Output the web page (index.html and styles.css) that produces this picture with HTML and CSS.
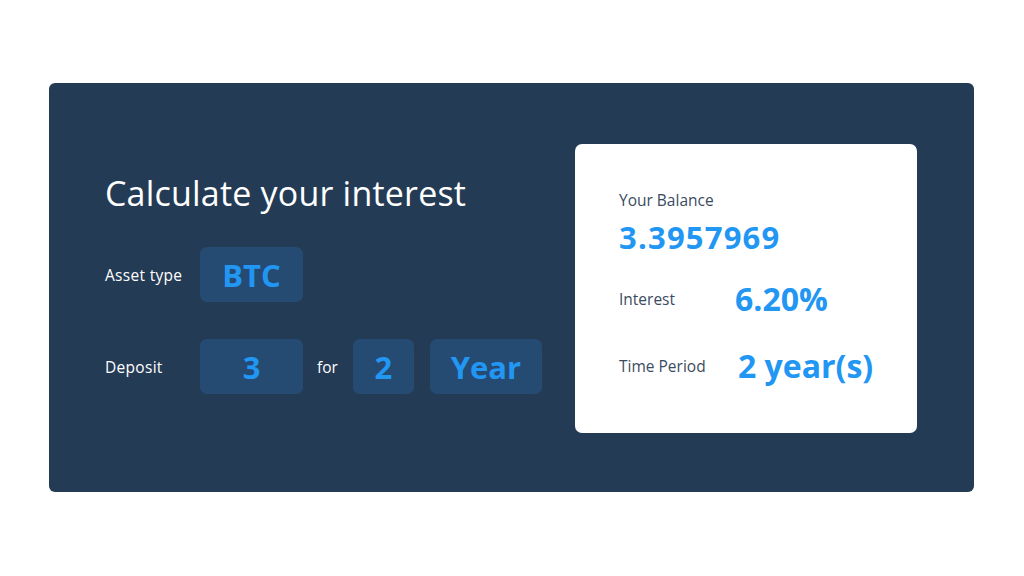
FILE: index.html
```html
<!DOCTYPE html>
<html lang="en">

<head>
    <meta charset="UTF-8">
    <title>Interest Calculator</title>
    <link rel="stylesheet" href="styles.css">
</head>

<body>
    <div class="calculator">

        <!-- Inputs -->
        <div class="inputs">
            <h1>Calculate your interest</h1>

            <div class="row">
                <span class="label">Asset type</span>
                <span class="box box-asset">BTC</span>
            </div>

            <div class="row">
                <span class="label">Deposit</span>
                <span class="box box-amount">3</span>
                <span class="for">for</span>
                <span class="box box-period">2</span>
                <span class="box box-unit">Year</span>
            </div>
        </div>

        <!-- Result -->
        <div class="result">
            <div class="balance-label">Your Balance</div>
            <div class="balance-value">3.3957969</div>

            <div class="result-row">
                <span class="result-label">Interest</span>
                <span class="result-value">6.20%</span>
            </div>

            <div class="result-row">
                <span class="result-label">Time Period</span>
                <span class="result-value period">2 year(s)</span>
            </div>
        </div>

    </div>
</body>

</html>
```

FILE: styles.css
```css
body {
    font-family: "Open Sans", Arial, sans-serif;
    margin: 0;
    padding: 0;
    background-color: #fff;
}

.calculator {
    margin: 83px 0 0 49px;
    width: 925px;
    height: 409px;
    box-sizing: border-box;
    padding: 0 57px 0 56px;
    background-color: #243b55;
    border-radius: 6px;
    display: flex;
    align-items: flex-start;
    justify-content: space-between;
}

.inputs {
    margin-top: 90px;
}

h1 {
    color: #fff;
    font-size: 34px;
    font-weight: 400;
    letter-spacing: 0.2px;
    margin: 0 0 34px;
    line-height: 40px;
}

.row {
    display: flex;
    align-items: center;
    margin-bottom: 37px;
}

.row:last-child {
    margin-bottom: 0;
}

.label {
    width: 95px;
    color: #fff;
    font-size: 15.5px;
    letter-spacing: 0.3px;
}

.box {
    height: 55px;
    display: flex;
    align-items: center;
    justify-content: center;
    background-color: #264b73;
    border-radius: 7px;
    color: #2196f3;
    font-size: 31px;
    font-weight: 700;
}

.box-asset,
.box-amount {
    width: 103px;
}

.for {
    color: #fff;
    font-size: 15.5px;
    margin: 0 15px 0 14px;
}

.box-period {
    width: 61px;
    margin-right: 16px;
}

.box-unit {
    width: 112px;
}

.result {
    margin-top: 61px;
    width: 342px;
    height: 289px;
    box-sizing: border-box;
    padding: 45px 0 0 44px;
    background-color: #fff;
    border-radius: 7px;
}

.balance-label {
    color: #3b4b5f;
    font-size: 15.5px;
    line-height: 22px;
}

.balance-value {
    color: #2196f3;
    font-size: 31px;
    font-weight: 700;
    letter-spacing: 1.2px;
    line-height: 40px;
    margin-top: 6px;
}

.result-row {
    display: flex;
    align-items: center;
    margin-top: 21px;
}

.result-row + .result-row {
    margin-top: 25px;
}

.result-label {
    width: 116px;
    color: #3b4b5f;
    font-size: 15.5px;
}

.result-value {
    color: #2196f3;
    font-size: 32px;
    font-weight: 700;
    line-height: 42px;
}

.result-value.period {
    margin-left: 3px;
}
```
